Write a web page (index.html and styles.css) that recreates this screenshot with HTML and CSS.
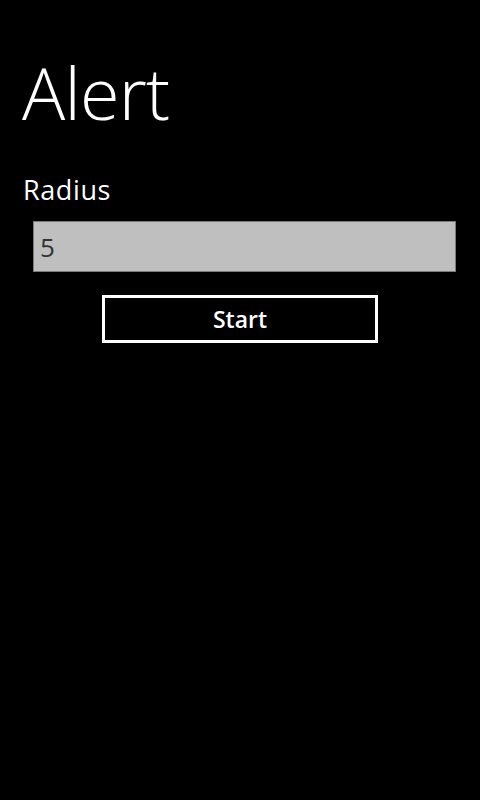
FILE: index.html
```html
<!DOCTYPE html>
<html>
<head>
<meta charset="utf-8">
<link rel="stylesheet" href="styles.css">
</head>
<body>
<main class="page">
  <h1 class="title">Alert</h1>
  <label class="label" for="radius">Radius</label>
  <div class="field">
    <input id="radius" class="input" type="text" value="5">
  </div>
  <div class="actions">
    <button class="btn" type="button">Start</button>
  </div>
</main>
</body>
</html>
```
FILE: styles.css
```css
html, body {
  margin: 0;
  padding: 0;
  background: #000;
  width: 480px;
  height: 800px;
  overflow: hidden;
}
.page {
  display: flex;
  flex-direction: column;
  font-family: "Open Sans", "Noto Sans", sans-serif;
  color: #fff;
}
.title {
  margin: 56px 0 0 22px;
  font-size: 72px;
  font-weight: 300;
  line-height: 72px;
  letter-spacing: -0.8px;
}
.label {
  margin: 48px 0 0 23px;
  font-size: 27px;
  line-height: 27px;
  font-weight: 400;
  letter-spacing: 0.6px;
}
.field {
  margin: 18px 24px 0 33px;
  display: flex;
}
.input {
  flex: 1;
  box-sizing: border-box;
  height: 51px;
  margin: 0;
  padding: 0 0 0 6px;
  border: 1px solid #7a7a7a;
  background: #bfbfbf;
  color: #333;
  font-family: "Open Sans", "Noto Sans", sans-serif;
  font-size: 26px;
  outline: none;
}
.actions {
  display: flex;
  justify-content: center;
  margin-top: 23px;
}
.btn {
  box-sizing: border-box;
  width: 276px;
  height: 48px;
  margin: 0;
  padding: 0 0 0 0;
  border: 3px solid #fff;
  background: #000;
  color: #fff;
  font-family: "Open Sans", "Noto Sans", sans-serif;
  font-size: 23px;
  font-weight: 600;
  line-height: 1;
}
```
